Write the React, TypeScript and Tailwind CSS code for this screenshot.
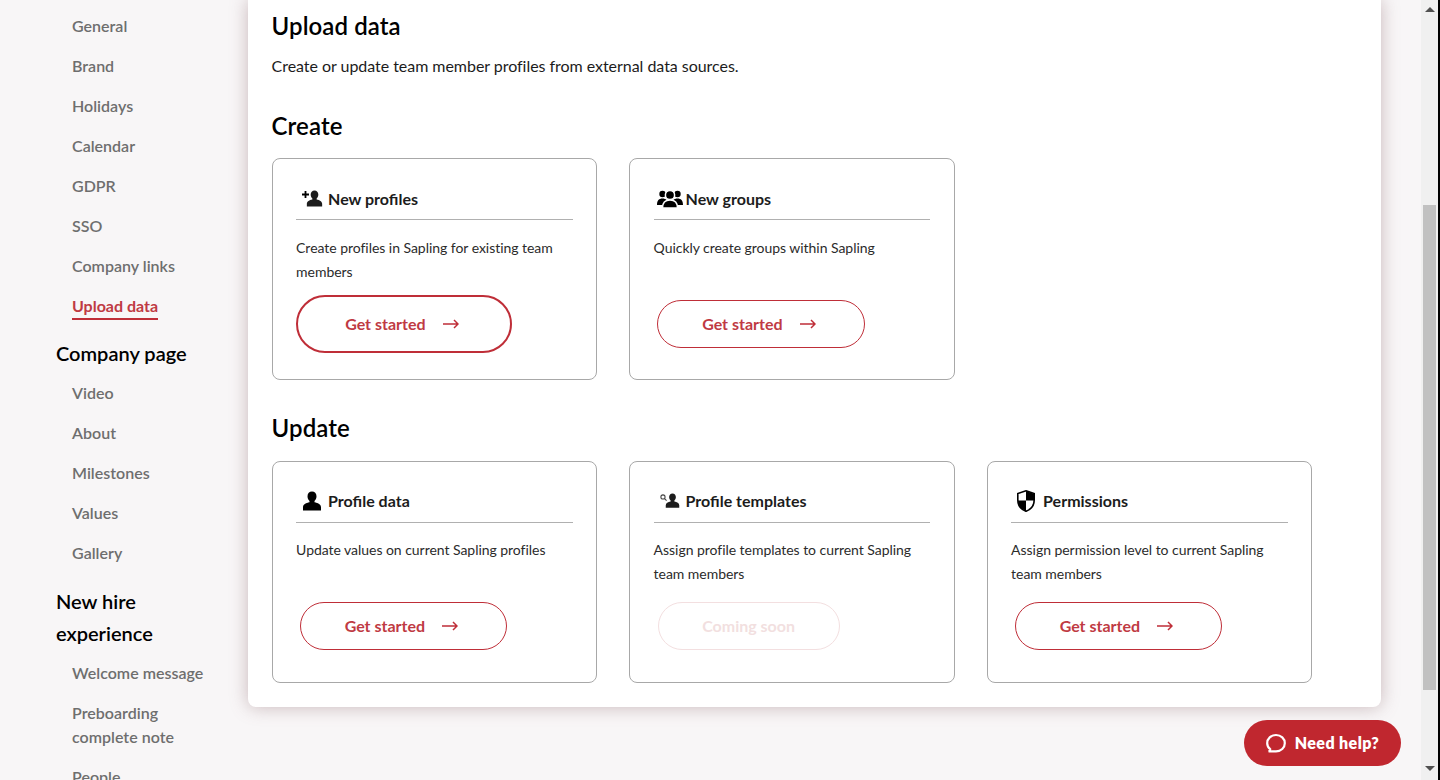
const SETTINGS_LINKS = ["General", "Brand", "Holidays", "Calendar", "GDPR", "SSO", "Company links"];
const COMPANY_LINKS = ["Video", "About", "Milestones", "Values", "Gallery"];

function NavLink({ label }: { label: string }) {
  return <div className="mb-4 text-[16px] leading-6 font-semibold tracking-[0.01px] text-[#6e6e6e]">{label}</div>;
}

function PersonIcon({ className }: { className: string }) {
  return (
    <svg viewBox="0 0 20 20" className={className} fill="currentColor" aria-hidden>
      <path d="M10 .5c2.7 0 4.5 2 4.5 4.8 0 2-.8 3.6-2 4.7v1.3c3.4.6 6.5 2.2 6.5 5v3.2H1v-3.2c0-2.8 3.1-4.4 6.5-5V10c-1.2-1.1-2-2.7-2-4.7C5.500 2.500 7.300.5 10 .5z" />
    </svg>
  );
}

function NewProfileIcon() {
  return (
    <span className="relative mr-[5px] ml-[6px] block h-[20px] w-[21px]">
      <svg viewBox="0 0 7 7" className="absolute top-[2px] left-0 h-[7px] w-[7px]" fill="none" stroke="black" strokeWidth="1.8" aria-hidden>
        <path d="M3.500 0v7M0 3.500h7" />
      </svg>
      <PersonIcon className="absolute top-[1px] left-[4px] h-[17px] w-[17px]" />
    </span>
  );
}

function GroupIcon() {
  return (
    <svg viewBox="0 0 26 18" className="mr-[3px] ml-[3px] h-[18px] w-[26px]" fill="black" aria-hidden>
      <circle cx="5.500" cy="4" r="3.200" />
      <circle cx="20.500" cy="4" r="3.200" />
      <path d="M0 15c0-4.500 2-6.500 5.500-6.500S11 10.500 11 15zM15 15c0-4.500 2-6.500 5.500-6.500S26 10.500 26 15z" />
      <g stroke="white" strokeWidth="1.500">
        <circle cx="13" cy="5" r="4.600" />
        <path d="M5.500 18c0-5 2.500-8 7.500-8s7.500 3 7.500 8z" />
      </g>
    </svg>
  );
}

function TemplateIcon() {
  return (
    <span className="relative mr-[6px] ml-[6px] block h-[20px] w-[20px]">
      <svg viewBox="0 0 8 8" className="absolute top-[3px] left-0 h-[7px] w-[7px]" fill="none" stroke="#444" strokeWidth="1.2" aria-hidden>
        <circle cx="3.400" cy="3.400" r="2.400" />
        <path d="M5.200 5.200 7.500 7.500" />
      </svg>
      <PersonIcon className="absolute top-[2px] left-[5px] h-[15px] w-[15px]" />
    </span>
  );
}

function ShieldIcon() {
  return (
    <svg viewBox="0 0 18 22" className="mr-[8px] ml-[6px] h-[22px] w-[18px]" aria-hidden>
      <path d="M9 .8 17.200 3.500V10c0 5.500-3.500 9.500-8.200 11.300C4.300 19.500.8 15.500.8 10V3.500z" fill="white" stroke="black" strokeWidth="1.600" />
      <path d="M9 1 17 3.700V10.500H9zM9 10.500V21C4.500 19.300 1 15.500 1 10.500z" fill="black" />
    </svg>
  );
}

function CardButton({ label, large, muted }: { label: string; large?: boolean; muted?: boolean }) {
  if (muted) {
    return (
      <div className="mt-[16px] ml-[4px] flex h-[48px] w-[182px] items-center justify-center rounded-full border border-[#f3dfe0] text-[16px] font-bold text-[#f2dfe0]">
        {label}
      </div>
    );
  }
  return (
    <div
      className={
        large
          ? "mt-[11px] -ml-[0.5px] flex h-[58px] w-[216.5px] items-center justify-center gap-[17px] rounded-full border-2 border-[#bf2e38] pr-[4px] text-[16px] font-bold text-[#bf3a43]"
          : "mt-[16px] ml-[3.5px] flex h-[48px] w-[207.5px] items-center justify-center gap-[17px] rounded-full border border-[#bf2e38] pr-[4px] text-[16px] font-bold text-[#bf3a43]"
      }
    >
      <span>{label}</span>
      <svg width="16" height="10" viewBox="0 0 16 10" fill="none" stroke="#bf2e38" strokeWidth="1.500" aria-hidden>
        <path d="M0 5h15M11 1l4 4-4 4" />
      </svg>
    </div>
  );
}

function Card({
  icon,
  title,
  text,
  children,
}: {
  icon: React.ReactNode;
  title: string;
  text: React.ReactNode;
  children: React.ReactNode;
}) {
  return (
    <div className="h-[222px] w-[325.5px] rounded-lg border border-[#a8a8a8] bg-white px-[23.5px] pt-[24px]">
      <div className="flex h-[37px] items-center border-b border-[#b0b0b0] pb-[5px] text-[16px] font-bold text-[#1c1c1c]">
        {icon}
        {title}
      </div>
      <div className="mt-[15.6px] h-[48px] text-[14px] leading-6 tracking-[-0.04px] text-[#2b2b2b]">{text}</div>
      {children}
    </div>
  );
}

export default function App() {
  return (
    <div className="relative flex h-[780px] w-[1440px] overflow-hidden bg-[#f8f6f7] font-['Lato','Noto_Sans',sans-serif]">
      <aside className="h-full w-[248px] shrink-0 overflow-hidden pt-[14px]">
        <div className="pl-[72px]">
          {SETTINGS_LINKS.map((l) => (
            <NavLink key={l} label={l} />
          ))}
          <div className="w-fit border-b-2 border-[#bf2e38] text-[16px] leading-6 font-bold text-[#bf3a43]">Upload data</div>
        </div>
        <div className="mt-[17px] pl-[56px] text-[20px] leading-8 font-semibold text-black">Company page</div>
        <div className="mt-[12px] pl-[72px]">
          {COMPANY_LINKS.map((l) => (
            <NavLink key={l} label={l} />
          ))}
        </div>
        <div className="mt-[20px] w-[190px] pl-[56px] text-[20px] leading-8 font-semibold text-black">New hire experience</div>
        <div className="mt-[12px] w-[220px] pl-[72px]">
          <NavLink label="Welcome message" />
          <NavLink label="Preboarding complete note" />
          <NavLink label="People" />
        </div>
      </aside>

      <main className="h-[707px] w-[1133px] shrink-0 rounded-b-lg bg-white pl-[23.6px] shadow-[0_0_18px_rgba(130,90,95,0.4)]">
        <h1 className="pt-[10px] text-[24px] leading-8 font-semibold tracking-[0.08px] text-black">Upload data</h1>
        <p className="mt-[12px] text-[16px] leading-6 tracking-[-0.04px] text-[#1c1c1c]">Create or update team member profiles from external data sources.</p>

        <h2 className="mt-[32px] text-[24px] leading-8 font-semibold tracking-[0.08px] text-black">Create</h2>
        <div className="mt-[16px] flex gap-8">
          <Card icon={<NewProfileIcon />} title="New profiles" text="Create profiles in Sapling for existing team members">
            <CardButton label="Get started" large />
          </Card>
          <Card icon={<GroupIcon />} title="New groups" text="Quickly create groups within Sapling">
            <CardButton label="Get started" />
          </Card>
        </div>

        <h2 className="mt-[32px] text-[24px] leading-8 font-semibold tracking-[0.08px] text-black">Update</h2>
        <div className="mt-[16.5px] flex gap-8">
          <Card icon={<PersonIcon className="mr-[6px] ml-[6px] h-[20px] w-[20px] text-black" />} title="Profile data" text="Update values on current Sapling profiles">
            <CardButton label="Get started" />
          </Card>
          <Card icon={<TemplateIcon />} title="Profile templates" text="Assign profile templates to current Sapling team members">
            <CardButton label="Coming soon" muted />
          </Card>
          <Card icon={<ShieldIcon />} title="Permissions" text="Assign permission level to current Sapling team members">
            <CardButton label="Get started" />
          </Card>
        </div>
      </main>

      {/* browser scrollbar */}
      <div className="ml-auto flex h-full w-[19px] flex-col items-center border-r-2 border-black bg-[#f0f0f0]">
        <div className="mt-[7px] h-0 w-0 border-x-[5px] border-b-[5px] border-x-transparent border-b-[#505050]" />
        <div className="mt-[193px] h-[485px] w-[13px] bg-[#c1c1c1]" />
        <div className="mt-[76px] h-0 w-0 border-x-[5px] border-t-[5px] border-x-transparent border-t-[#505050]" />
      </div>

      <div className="absolute top-[720px] left-[1244px] flex h-[46px] w-[157px] items-center justify-center gap-[9px] rounded-full bg-[#c0272f] text-[16px] font-extrabold tracking-[0.4px] text-white">
        <svg width="20" height="20" viewBox="0 0 20 20" fill="none" stroke="white" strokeWidth="2.200" aria-hidden>
          <path d="M4.200 16.200C2.400 14.800 1.200 12.700 1.200 10.200 1.200 5.600 5 2 10 2s8.800 3.600 8.800 8.200-3.800 8.200-8.800 8.200H2.600c1-.4 1.600-1.200 1.600-2.200z" />
        </svg>
        Need help?
      </div>
    </div>
  );
}
